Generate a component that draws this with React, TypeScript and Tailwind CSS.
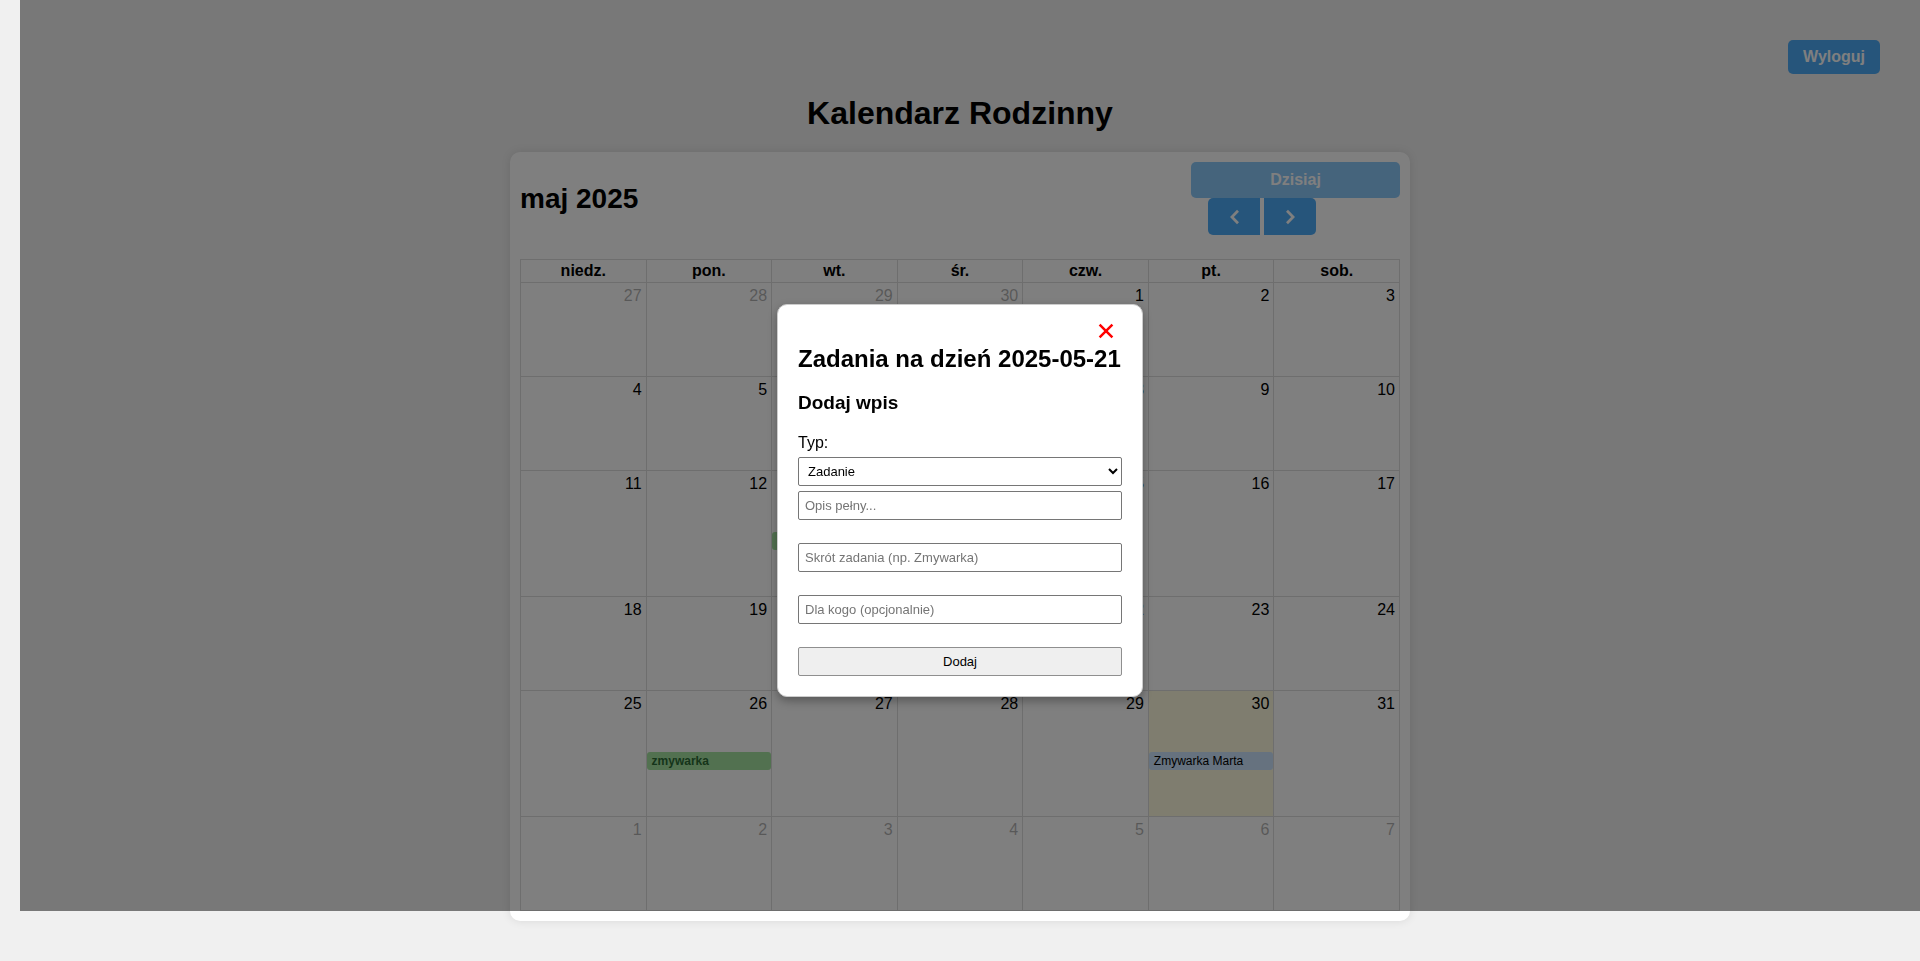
import React from "react";

type CalendarEvent = { label: string; kind: "chore" | "task" };
type Day = { n: number; other?: boolean; today?: boolean; event?: CalendarEvent };

const DAY_NAMES = ["niedz.", "pon.", "wt.", "śr.", "czw.", "pt.", "sob."];

const range = (from: number, to: number, other = false): Day[] =>
  Array.from({ length: to - from + 1 }, (_, i) => ({ n: from + i, other }));

const DAYS: Day[] = [...range(27, 30, true), ...range(1, 31), ...range(1, 7, true)].map((d) => {
  if (d.other) return d;
  if (d.n === 13 || d.n === 26) return { ...d, event: { label: "zmywarka", kind: "chore" } };
  if (d.n === 30) return { ...d, today: true, event: { label: "Zmywarka Marta", kind: "task" } };
  return d;
});

const WEEKS = [0, 1, 2, 3, 4, 5].map((w) => DAYS.slice(w * 7, w * 7 + 7));

const EVENT_STYLES = {
  chore: "bg-[#a5e3a1] font-bold text-[#2b6a35]",
  task: "bg-[#cce5ff] text-black",
};

function Chevron({ d }: { d: string }) {
  return (
    <svg viewBox="0 0 24 24" className="h-6 w-6" fill="none" stroke="currentColor" strokeWidth="2.7" aria-hidden="true">
      <path d={d} />
    </svg>
  );
}

function DayCell({ day }: { day: Day }) {
  return (
    <td className={`border border-[#ddd] p-0 align-top ${day.today ? "bg-[#fffadf]" : ""}`}>
      <div className={`p-1 text-right leading-[18px] ${day.other ? "opacity-30" : ""}`}>{day.n}</div>
      {day.event && (
        <div className={`mt-[35px] h-[18px] rounded-[3px] px-[5px] text-[12px] leading-[18px] ${EVENT_STYLES[day.event.kind]}`}>
          {day.event.label}
        </div>
      )}
    </td>
  );
}

function Calendar() {
  return (
    <section className="mx-auto w-full max-w-[900px] rounded-[10px] bg-white p-[10px] shadow-[0_0_10px_rgba(0,0,0,0.1)]">
      <div className="mb-6 flex items-center justify-between">
        <h2 className="text-[28px] font-bold leading-8">maj 2025</h2>
        <div className="w-[209px] text-white">
          <button disabled className="block h-9 w-full rounded-[5px] bg-[#4dabf7] font-bold opacity-65">
            Dzisiaj
          </button>
          <div className="flex gap-1 pl-[17px]">
            <button aria-label="Poprzedni miesiąc" className="flex h-[37px] w-[52px] items-center justify-center rounded-l-[5px] bg-[#4dabf7]">
              <Chevron d="M16 5.7 9.9 12l6.1 6.3" />
            </button>
            <button aria-label="Następny miesiąc" className="flex h-[37px] w-[52px] items-center justify-center rounded-r-[5px] bg-[#4dabf7]">
              <Chevron d="M9 5.7 15.1 12 9 18.3" />
            </button>
          </div>
        </div>
      </div>
      <table className="w-full table-fixed border-collapse">
        <thead>
          <tr className="h-[23px]">
            {DAY_NAMES.map((name) => (
              <th key={name} className="border border-[#ddd] p-0 font-bold leading-[18px]">
                {name}
              </th>
            ))}
          </tr>
        </thead>
        <tbody>
          {WEEKS.map((week, i) => (
            <tr key={i} className={week.some((d) => d.event) ? "h-[126px]" : "h-[94px]"}>
              {week.map((day, j) => (
                <DayCell key={j} day={day} />
              ))}
            </tr>
          ))}
        </tbody>
      </table>
    </section>
  );
}

const FIELD = "block h-[29px] w-full rounded-[2px] border border-[#767676] bg-white px-[6px] text-[13px] text-black placeholder:text-[#757575]";

function TaskDialog() {
  return (
    <div role="dialog" aria-labelledby="dialog-title" className="w-[366px] rounded-[10px] border border-[#ccc] bg-white p-5 shadow-[0_4px_10px_rgba(0,0,0,0.3)]">
      <div className="flex h-5 justify-end pr-2">
        <button aria-label="Zamknij" className="flex h-3 w-4 items-center justify-center text-[#f00]">
          <svg viewBox="0 0 16 16" className="h-4 w-4 shrink-0" stroke="currentColor" strokeWidth="2.5" aria-hidden="true">
            <path d="M1.6 1.6 14.4 14.4M14.4 1.6 1.6 14.4" />
          </svg>
        </button>
      </div>
      <h2 id="dialog-title" className="whitespace-nowrap text-[24px] font-bold leading-7">Zadania na dzień 2025-05-21</h2>
      <h3 className="mt-[19px] text-[19px] font-bold leading-[22px]">Dodaj wpis</h3>
      <form onSubmit={(e) => e.preventDefault()}>
        <label htmlFor="entry-type" className="mt-5 block leading-[18px]">Typ:</label>
        <select id="entry-type" className="mt-[5px] block h-[29px] w-full rounded-[2px] border border-[#767676] bg-white px-[5px] text-[13px]">
          <option>Zadanie</option>
        </select>
        <div className="mt-[5px] flex flex-col gap-[23px]">
          <input aria-label="Opis pełny" placeholder="Opis pełny..." className={FIELD} />
          <input aria-label="Skrót zadania" placeholder="Skrót zadania (np. Zmywarka)" className={FIELD} />
          <input aria-label="Dla kogo" placeholder="Dla kogo (opcjonalnie)" className={FIELD} />
          <button className="h-[29px] rounded-[2px] border border-[#8f8f8f] bg-[#efefef] text-[13px]">Dodaj</button>
        </div>
      </form>
    </div>
  );
}

export default function App() {
  return (
    <div className="relative min-h-screen bg-[#f0f0f0] px-5 pb-10 pt-10 font-['Liberation_Sans',Arial,sans-serif] text-[16px] text-black">
      <header className="flex justify-end pr-5">
        <button className="h-[34px] rounded-[5px] bg-[#4dabf7] px-[15px] font-bold leading-[18px] text-white">Wyloguj</button>
      </header>
      <h1 className="mb-5 mt-[21px] text-center text-[32px] font-bold leading-[37px]">Kalendarz Rodzinny</h1>
      <Calendar />
      <div className="absolute bottom-[50px] left-5 right-0 top-0 bg-black/50" />
      <div className="fixed inset-x-0 bottom-0 top-10 flex items-center justify-center">
        <TaskDialog />
      </div>
    </div>
  );
}
